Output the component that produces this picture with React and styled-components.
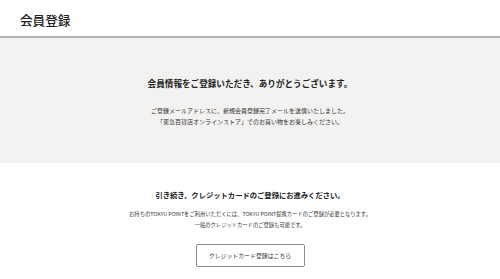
import React from 'react'
import styled, { createGlobalStyle } from 'styled-components'

const Global = createGlobalStyle`
  html, body {
    margin: 0;
    padding: 0;
    background: #fff;
  }
  body {
    font-family: "Noto Sans CJK JP", "Noto Sans", sans-serif;
    color: #222;
  }
`

const Header = styled.header`
  height: 38px;
  border-bottom: 2px solid #b2b2b2;
  display: flex;
  align-items: center;
  padding: 4px 0 0 20px;
  box-sizing: border-box;
`

const PageTitle = styled.h1`
  margin: 0;
  font-size: 12.6px;
  font-weight: 500;
  color: #222;
  line-height: 1;
`

const Section = styled.section`
  background: ${p => (p.$grey ? '#f3f2f0' : '#fff')};
  display: flex;
  flex-direction: column;
  align-items: center;
  text-align: center;
  padding: ${p => p.$pad};
  height: ${p => p.$height || 'auto'};
  box-sizing: border-box;
`

const Title = styled.h2`
  margin: 0 0 ${p => p.$gap};
  font-size: ${p => p.$size};
  line-height: ${p => p.$lh};
  font-weight: 700;
  color: #222;
`

const Text = styled.p`
  margin: 0;
  font-size: ${p => p.$size};
  line-height: 11px;
  color: #333;
  white-space: nowrap;
`

const Button = styled.a`
  margin-top: 13px;
  width: 109px;
  height: 23px;
  box-sizing: border-box;
  border: 1px solid #8c8c8c;
  border-radius: 2px;
  display: flex;
  align-items: center;
  justify-content: center;
  font-size: 5.9px;
  color: #333;
  text-decoration: none;
  background: #fff;
`

export default function App() {
  return (
    <>
      <Global />
      <Header>
        <PageTitle>会員登録</PageTitle>
      </Header>
      <Section $grey $pad="38px 0 0" $height="125px">
        <Title $size="8.6px" $lh="14px" $gap="15px">
          会員情報をご登録いただき、ありがとうございます。
        </Title>
        <Text $size="6px">ご登録メールアドレスに、新規会員登録完了メールを送信いたしました。</Text>
        <Text $size="6px">「東急百貨店オンラインストア」でのお買い物をお楽しみください。</Text>
      </Section>
      <Section $pad="26px 0 0">
        <Title $size="7.3px" $lh="12px" $gap="8px">
          引き続き、クレジットカードのご登録にお進みください。
        </Title>
        <Text $size="5.3px">
          お持ちのTOKYU POINTをご利用いただくには、TOKYU POINT提携カードのご登録が必要となります。
        </Text>
        <Text $size="5.3px">一般のクレジットカードのご登録も可能です。</Text>
        <Button href="#">クレジットカード登録はこちら</Button>
      </Section>
    </>
  )
}
